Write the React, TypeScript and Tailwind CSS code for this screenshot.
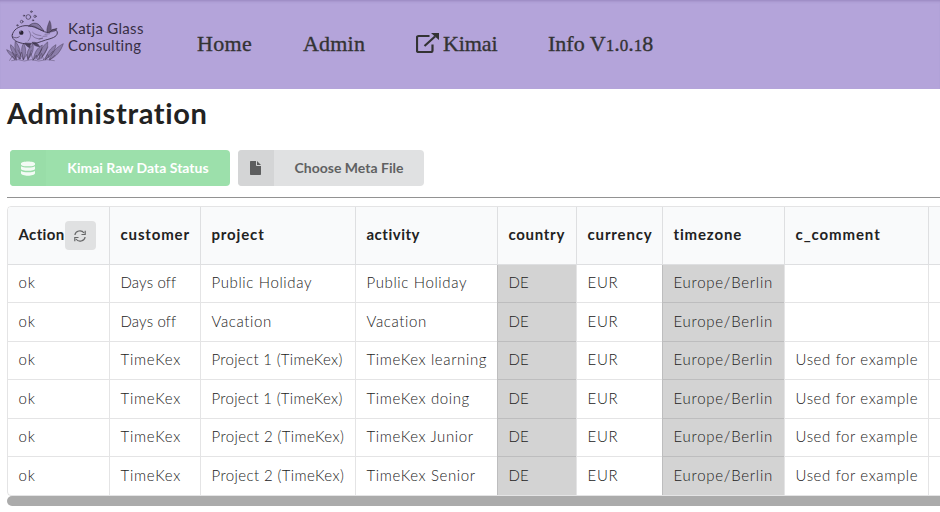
import type { ReactNode } from "react";

const columns = [
  { label: "Action", tracking: "tracking-[0.35px]" },
  { label: "customer", tracking: "tracking-[0.85px]" },
  { label: "project", tracking: "tracking-[0.85px]" },
  { label: "activity", tracking: "tracking-[0.5px]" },
  { label: "country", tracking: "tracking-[0.7px]" },
  { label: "currency", tracking: "tracking-[0.85px]" },
  { label: "timezone", tracking: "tracking-[0.85px]" },
  { label: "c_comment", tracking: "tracking-[0.9px]" },
  { label: "", tracking: "" },
];

const tracking: Record<string, string> = {
  "ok": "tracking-[0.8px]",
  "Days off": "tracking-[0.15px]",
  "DE": "tracking-[0px]",
  "EUR": "tracking-[0.7px]",
  "Europe/Berlin": "tracking-[0.75px]",
  "TimeKex": "tracking-[0.75px]",
  "Project 1 (TimeKex)": "tracking-[0.32px]",
  "Project 2 (TimeKex)": "tracking-[0.4px]",
};

const rows = [
  ["ok", "Days off", "Public Holiday", "Public Holiday", "DE", "EUR", "Europe/Berlin", "", ""],
  ["ok", "Days off", "Vacation", "Vacation", "DE", "EUR", "Europe/Berlin", "", ""],
  ["ok", "TimeKex", "Project 1 (TimeKex)", "TimeKex learning", "DE", "EUR", "Europe/Berlin", "Used for example", ""],
  ["ok", "TimeKex", "Project 1 (TimeKex)", "TimeKex doing", "DE", "EUR", "Europe/Berlin", "Used for example", ""],
  ["ok", "TimeKex", "Project 2 (TimeKex)", "TimeKex Junior", "DE", "EUR", "Europe/Berlin", "Used for example", ""],
  ["ok", "TimeKex", "Project 2 (TimeKex)", "TimeKex Senior", "DE", "EUR", "Europe/Berlin", "Used for example", ""],
];

const grid = "grid grid-cols-[101px_91px_155px_142px_79px_86px_122px_144px_1fr]";
const line = "border-[rgba(34,36,38,0.12)]";

function FishLogo() {
  return (
    <svg className="h-[60px] w-[64px] shrink-0" viewBox="0 0 192 180" fill="none" stroke="#40364f" strokeLinecap="round" strokeLinejoin="round">
      <g strokeWidth="2">
        <circle cx="79" cy="33" r="7" />
        <circle cx="66" cy="29" r="2" />
        <circle cx="88" cy="17" r="2.500" />
        <circle cx="99" cy="31" r="3.500" />
        <circle cx="59" cy="47" r="4" />
        <circle cx="93" cy="43" r="2" />
        <circle cx="46" cy="58" r="2" />
      </g>
      <path d="M31 86c3-14 17-25 38-27 28-2 48 17 65 20 8 1 12-1 14-5 8-6 18-3 18 7-1 12-17 16-35 21-18 6-33 13-53 12-23-1-43-8-47-21-1-3-1-5 0-7z" strokeWidth="2.800" />
      <path d="M33 93c7 4 14 3 19-1" strokeWidth="2" />
      <path d="M80 60c8-9 22-12 32-3l14 18c-13-3-21-11-31-14z" fill="#40364f" fillOpacity="0.4" strokeWidth="2" />
      <path d="M135 79c-2-12 3-22 8-35 5 10 5 20 4 28l18-5c-2 6-5 8-10 9l-9 2z" fill="#40364f" fillOpacity="0.65" strokeWidth="1.500" />
      <path d="M81 75c8 8 5 23-3 30M89 87c10 12 22 13 32 9M92 79c8 9 18 8 25 10M123 91l12-1M129 85l14-2M111 100l11-3" strokeWidth="1.800" opacity="0.7" />
      <circle cx="58" cy="80" r="6.500" fill="#292232" stroke="none" />
      <circle cx="56" cy="77" r="1.500" fill="#b4a4da" stroke="none" />
      <path d="M69 112c2 7 8 11 14 13l3-12zM91 109c10-2 17 3 22 13-11 0-19-5-22-13z" fill="#40364f" fillOpacity="0.85" strokeWidth="1.500" />
      <g fill="#40364f" fillOpacity="0.35" strokeWidth="2" strokeOpacity="0.65">
        <path d="M43 161c-15-8-25-20-29-30 14 5 24 17 29 30zM43 157c-13-16-20-33-17-41 12 8 18 23 17 41zM55 158c-17-20-18-36-15-52 13 16 17 33 15 52zM65 159c-9-22-7-36 0-48 9 19 7 34 0 48zM78 159c-7-17 0-31 15-44 3 18-3 32-15 44zM95 160c1-21 12-35 26-43-2 20-12 34-26 43zM111 160c0-22 11-41 26-52 2 23-10 41-26 52zM130 160c5-20 16-35 32-44-3 20-15 36-32 44zM143 161c6-24 23-39 41-48-7 22-21 39-41 48z" />
      </g>
      <path d="M23 163l8-13 7 12 5-18 9 16 6-22 6 24 10-17 4 17 9-20 6 21 10-16 4 15 12-20 6 20 12-17 7 16 14-13M31 139l23 20M48 132l16 29M88 133l-9 23M119 130l-17 29M138 123l-21 36M152 136l-21 24" strokeWidth="2" opacity="0.65" />
      <path d="M29 164l20-3 18 4 21-4 22 4 25-4 22 3" strokeWidth="2.500" opacity="0.45" />
    </svg>
  );
}

function ExternalIcon() {
  return (
    <svg className="h-[20px] w-[23px] shrink-0" viewBox="0 0 23 20" fill="none" stroke="#333333" strokeWidth="2">
      <path d="M13.500 3H2.500Q1 3 1 4.500v13Q1 19 2.500 19H15Q16.500 19 16.500 17.500v-6M8.500 13 19 3.500" strokeWidth="2.200" />
      <path d="M15 0h8v7l-2.600-2.300L17.500 2.200z" fill="#333333" stroke="none" />
    </svg>
  );
}

function DatabaseIcon() {
  return (
    <svg className="h-[15px] w-[14px]" viewBox="0 0 14 15" fill="#fff" fillOpacity="0.88">
      <path d="M0 2.400C0-.300 14-.300 14 2.400v1C14 6 0 6 0 3.400zM0 5.200c2 1.800 12 1.800 14 0v2.600c0 2.700-14 2.700-14 0zM0 9.900c2 1.800 12 1.800 14 0v2.300c0 3.300-14 3.300-14 0z" />
    </svg>
  );
}

function FileIcon() {
  return (
    <svg className="mr-px h-[14px] w-[11px]" viewBox="0 0 11 14" fill="#5d5e5f">
      <path d="M.700 0H6v4.200q0 .800.800.800H11v8.300q0 .700-.700.700H.700Q0 14 0 13.300V.700Q0 0 .700 0zM7 0l4 4H7z" />
    </svg>
  );
}

function RefreshIcon() {
  return (
    <svg className="h-[12px] w-[12px]" viewBox="0 0 12 12" fill="none" stroke="#666768" strokeWidth="1.200">
      <path d="M.900 5C1.500.700 7.500-.700 10 3M11.100 7C10.500 11.300 4.500 12.700 2 9M11.200.800v3.700H7.500M.800 11.200V7.500h3.700" />
    </svg>
  );
}

function IconButton({ icon, className, iconClass, children }: { icon: ReactNode; className: string; iconClass: string; children: ReactNode }) {
  return (
    <button className={`flex h-9 overflow-hidden rounded-[4px] font-['Lato',sans-serif] text-sm font-bold ${className}`}>
      <span className={`flex h-9 w-9 items-center justify-center ${iconClass}`}>{icon}</span>
      <span className="flex h-9 flex-1 items-center justify-center whitespace-nowrap">{children}</span>
    </button>
  );
}

export default function App() {
  return (
    <div className="h-[512px] w-[940px] overflow-hidden bg-white font-['Lato',sans-serif] text-[#222222]">
      <header className="flex h-[89px] items-start bg-[#b4a4da] pl-[2px] pt-[6px] shadow-[inset_0_3px_3px_-2px_rgba(80,60,120,0.3)]">
        <FishLogo />
        <div className="ml-[2px] mt-[14px] w-[129px] text-[15px] leading-[17px] text-[#382f45]">
          <div className="tracking-[0.3px]">Katja Glass</div>
          <div className="tracking-[0.3px]">Consulting</div>
        </div>
        <nav className="mt-[23px] flex h-7 items-center whitespace-nowrap font-['Liberation_Serif',serif] text-[22px] text-[#333333] [-webkit-text-stroke:0.35px_#333333]">
          <a className="w-[106px] tracking-[0.3px]">Home</a>
          <a className="w-[113px] tracking-[0.2px]">Admin</a>
          <a className="flex w-[132px] items-center gap-[4px]"><ExternalIcon /><span className="tracking-[-0.1px]">Kimai</span></a>
          <a>Info V<span className="text-[17px]">1</span>.<span className="text-[17px]">0</span>.<span className="text-[17px]">1</span>8</a>
        </nav>
      </header>
      <main className="pl-[7px]">
        <h1 className="h-[61px] pt-[6px] text-[29px] font-bold leading-9"><span className="tracking-[0.65px]">Administration</span></h1>
        <div className="flex gap-2 pl-[3px]">
          <IconButton icon={<DatabaseIcon />} className="w-[220px] bg-[#9ce0ab] text-white" iconClass="bg-[#99dda8]">Kimai Raw Data Status</IconButton>
          <IconButton icon={<FileIcon />} className="w-[186px] bg-[#e0e1e2] text-[#606162]" iconClass="bg-[#d4d5d6]">Choose Meta File</IconButton>
        </div>
        <div className="mt-[11px] h-px bg-[#929292]" />
        <div className={`mt-2 w-[960px] rounded-[4px] border ${line}`}>
          <div className={`${grid} h-[58px] rounded-t-[3px] border-b ${line} bg-[#f9fafb] text-[15px] font-bold`}>
            {columns.map((c, i) => (
              <div key={i} className={`flex items-center whitespace-nowrap pb-[2px] ${i ? `border-l pl-[10.5px] ${line}` : "pl-[10.5px]"}`}>
                <span className={c.tracking}>{c.label}</span>
                {i === 0 && <button className="mt-[2px] flex h-[29px] w-[31px] shrink-0 items-center justify-center rounded-[4px] bg-[#e0e1e2]"><RefreshIcon /></button>}
              </div>
            ))}
          </div>
          {rows.map((r, y) => (
            <div key={y} className={`${grid} ${y === 5 ? "h-[38px]" : y % 2 ? "h-[39px]" : "h-[38px]"} text-[15px] font-light`}>
              {r.map((c, x) => (
                <div key={x} className={`flex items-center whitespace-nowrap pb-[2px] pl-[10.5px] ${x ? "border-l" : ""} ${y < 5 ? "border-b" : ""} ${line} ${x === 4 || x === 6 ? "bg-[#d3d3d3]" : ""}`}>
                  <span className={tracking[c] ?? "tracking-[0.62px]"}>{c}</span>
                </div>
              ))}
            </div>
          ))}
        </div>
        <div className="h-[10px] w-[960px] rounded-full bg-[#ababab]" />
      </main>
    </div>
  );
}
